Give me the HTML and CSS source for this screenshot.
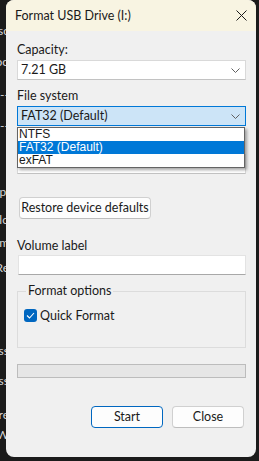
FILE: index.html
```html
<!DOCTYPE html>
<html>
<head>
<meta charset="utf-8" />
<title>Format USB Drive (I:)</title>
<link rel="stylesheet" href="styles.css">
</head>
<body>

<div class="desk">
  <span class="d1">Disc</span>
  <span class="d2">Too</span>
  <span class="d3">--</span>
  <span class="d4">--</span>
  <span class="d5">Appl</span>
  <span class="d6">Dlo</span>
  <span class="d7">Im</span>
  <span class="d8">Re</span>
  <span class="d9">ss</span>
  <span class="d10">ss</span>
  <span class="d11">are</span>
  <span class="d12">W</span>
</div>

<div class="dialog">
  <div class="titlebar">
    <span class="title">Format USB Drive (I:)</span>
    <svg class="close" width="11" height="11" viewBox="0 0 11 11">
      <path d="M0.5 0.5 L10.5 10.5 M10.5 0.5 L0.5 10.5" stroke="#1a1a1a" stroke-width="1" fill="none"/>
    </svg>
  </div>

  <div class="content">
    <div class="label lbl-capacity">Capacity:</div>
    <div class="combo">
      <span>7.21 GB</span>
      <svg class="chev" width="9" height="5" viewBox="0 0 9 5"><path d="M0.5 0.5 L4.5 4.5 L8.5 0.5" stroke="#606060" fill="none"/></svg>
    </div>

    <div class="label lbl-fs">File system</div>
    <div class="combo-wrap">
      <div class="combo active">
        <span>FAT32 (Default)</span>
        <svg class="chev" width="9" height="5" viewBox="0 0 9 5"><path d="M0.5 0.5 L4.5 4.5 L8.5 0.5" stroke="#606060" fill="none"/></svg>
      </div>
      <div class="droplist">
        <div class="opt">NTFS</div>
        <div class="opt sel">FAT32 (Default)</div>
        <div class="opt">exFAT</div>
      </div>
    </div>

    <!-- allocation unit row, covered by the open list -->
    <div class="label lbl-alloc"></div>
    <div class="combo"></div>

    <button class="btn restore" type="button">Restore device defaults</button>

    <div class="label lbl-vol">Volume label</div>
    <div class="textbox"></div>

    <fieldset class="group">
      <legend>Format options</legend>
      <label class="check">
        <span class="box">
          <svg width="9" height="7" viewBox="0 0 9 7"><path d="M1 3.5 L3.5 6 L8 1" stroke="#fff" stroke-width="1.1" fill="none"/></svg>
        </span>
        Quick Format
      </label>
    </fieldset>

    <div class="progress"></div>

    <div class="actions">
      <button class="btn primary" type="button">Start</button>
      <button class="btn" type="button">Close</button>
    </div>
  </div>
</div>

</body>
</html>
```

FILE: styles.css
```css
html, body {
  margin: 0; padding: 0;
  width: 259px; height: 461px;
  background: #1b1b1b;
  overflow: hidden;
  font-family: Lato, "Noto Sans", sans-serif;
  font-size: 12.5px;
  color: #1a1a1a;
  position: relative;
}
.desk {
  display: flex;
  flex-direction: column;
  align-items: flex-end;
  width: 9px;
  color: #d6d6d6;
  font-size: 12px;
  line-height: 14px;
  white-space: nowrap;
}
.desk span { display: block; }
.d1 { margin-top: 24px; }
.d2 { margin-top: 17px; }
.d3 { margin-top: 19px; }
.d4 { margin-top: 17px; }
.d5 { margin-top: 52px; }
.d6 { margin-top: 14px; }
.d7 { margin-top: 9px; }
.d8 { margin-top: 11px; }
.d9 { margin-top: 69px; }
.d10 { margin-top: 16px; }
.d11 { margin-top: 20px; }
.d12 { margin-top: 6px; }

.dialog {
  position: absolute;
  left: 6px; top: 0;
  width: 250px; height: 457px;
  background: #f0f0f0;
  border-radius: 8px;
  overflow: hidden;
  box-sizing: border-box;
}
.titlebar {
  height: 31px;
  background: #f8f4e2;
  display: flex;
  align-items: center;
  justify-content: space-between;
  padding: 0 9px 0 9px;
}
.title {
  margin-top: -1px;
}
.close { margin-top: -1px; }

.content {
  padding: 0 10px 0 11px;
  display: flex;
  flex-direction: column;
}
.label {
  height: 16px;
  line-height: 16px;
}
.lbl-capacity { margin-top: 11px; margin-bottom: 2px; }
.lbl-fs { margin-top: 8px; margin-bottom: 2px; }
.lbl-alloc { margin-top: 10px; margin-bottom: 2px; }
.lbl-vol { margin-top: 19px; margin-bottom: 1px; }

.combo {
  height: 20px;
  box-sizing: border-box;
  background: #fff;
  border: 1px solid #d9d9d9;
  border-bottom-color: #c2c2c2;
  display: flex;
  align-items: center;
  justify-content: space-between;
  padding: 0 5px 0 3px;
  line-height: 16px;
}
.combo.active {
  background: #cce4f7;
  border-color: #0078d7;
}
.chev { margin-top: 1px; }

.combo-wrap { position: relative; }
.droplist {
  position: absolute;
  left: 0; right: 1px; top: 21px;
  z-index: 5;
  background: #fff;
  border: 1px solid #646464;
  box-shadow: 2px 2px 3px rgba(0,0,0,0.35);
  font-family: "Liberation Sans", Arial, sans-serif;
  font-size: 12px;
}
.opt {
  height: 13px;
  line-height: 13px;
  padding-left: 1px;
}
.opt.sel {
  background: #0078d7;
  color: #fff;
}

.btn {
  font-family: Lato, "Noto Sans", sans-serif;
  font-size: 12.5px;
  color: #1a1a1a;
  background: #fdfdfd;
  border: 1px solid #d0d0d0;
  border-bottom-color: #bdbdbd;
  border-radius: 4px;
  height: 22px;
  padding: 0;
  line-height: 18px;
  white-space: nowrap;
  box-sizing: border-box;
}
.restore {
  align-self: flex-start;
  width: 132px;
  margin-top: 23px;
  margin-left: 2px;
}

.textbox {
  height: 20px;
  box-sizing: border-box;
  background: #fff;
  border: 1px solid #e3e3e3;
  border-bottom-color: #a8a8a8;
  margin-left: 1px;
}

.group {
  margin: 8px 0 0 0;
  padding: 9px 6px 0 6px;
  height: 65px;
  box-sizing: border-box;
  border: 1px solid #dcdcdc;
  min-width: 0;
}
.group legend {
  padding: 0 2px;
  margin-left: 2px;
  line-height: 16px;
}
.check {
  display: flex;
  align-items: center;
  gap: 3px;
}
.box {
  width: 13px; height: 13px;
  background: #0067c0;
  border-radius: 3px;
  display: flex;
  align-items: center;
  justify-content: center;
}

.progress {
  margin-top: 16px;
  height: 14px;
  box-sizing: border-box;
  border: 1px solid #bcbcbc;
  background: #e6e6e6;
}

.actions {
  display: flex;
  justify-content: flex-end;
  gap: 9px;
  margin-top: 28px;
  padding-right: 2px;
}
.actions .btn { width: 72px; }
.btn.primary { border: 1px solid #0067c0; }
```
